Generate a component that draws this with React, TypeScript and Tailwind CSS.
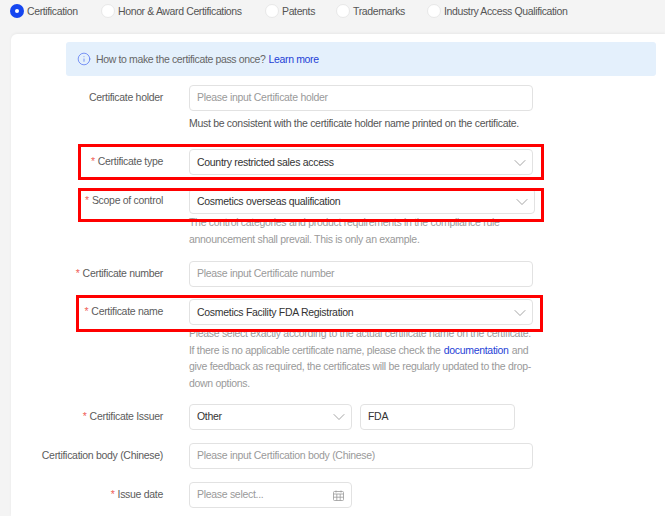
import React from 'react';
import { ChevronDown, Info } from 'lucide-react';

const tabs = ['Certification', 'Honor & Award Certifications', 'Patents', 'Trademarks', 'Industry Access Qualification'];
const tabClasses = ['w-[91px]', 'w-[164px]', 'w-[71px]', 'w-[91px]', 'w-auto'];

const Row: React.FC<{ label: string; required?: boolean; className?: string; children: React.ReactNode }> = ({ label, required, className, children }) => (
  <div className={`flex ${className || ''}`}>
    <div className="w-[141px] shrink-0 pr-[26px] h-[26px] flex items-center justify-end text-[10.5px] tracking-[-0.3px] text-[#5c5c5c] whitespace-nowrap">
      {required && <span className="text-[#f0625a] mr-[3px]">*</span>}
      {label}
    </div>
    <div className="min-w-0">{children}</div>
  </div>
);

const Field: React.FC<{ text: string; placeholder?: boolean; className?: string; children?: React.ReactNode }> = ({ text, placeholder, className, children }) => (
  <div className={`h-[26px] flex items-center justify-between pl-[7px] pr-[2px] bg-white border border-[#e2e2e2] rounded-[4px] text-[10.5px] tracking-[-0.3px] whitespace-nowrap ${placeholder ? 'text-[#9a9a9a]' : 'text-[#333]'} ${className || ''}`}>
    <span>{text}</span>
    {children}
  </div>
);

const Chevron = () => <ChevronDown size={20} strokeWidth={0.8} className="text-[#777]" />;

const Help: React.FC<{ className?: string; children: React.ReactNode }> = ({ className, children }) => (
  <div className={`text-[10.5px] tracking-[-0.3px] leading-[16.5px] whitespace-nowrap ${className || ''}`}>{children}</div>
);

const CalendarIcon = () => (
  <svg width="11" height="11" viewBox="0 0 11 11" fill="none" stroke="#999" strokeWidth="0.8" className="mr-[5px]">
    <rect x="0.5" y="1.5" width="10" height="9" rx="1" />
    <path d="M0.5 4h10M3 0.5v2M8 0.5v2M3.8 4v6.5M7.2 4v6.5M0.5 7.2h10" />
  </svg>
);

// the red marks sit over the form, they are annotations on the picture
const Mark: React.FC<{ className: string }> = ({ className }) => (
  <div className={`absolute border-[3px] border-[#ff0000] pointer-events-none ${className}`} />
);

export default function App() {
  return (
    <div className="relative w-[665px] h-[516px] overflow-hidden bg-[#f4f4f4] font-['Liberation_Sans',Arial,sans-serif]">
      <div className="h-[34px] pl-[10px] pt-[4px] flex items-start">
        {tabs.map((t, i) => (
          <div key={t} className={`flex items-center h-[14px] text-[10.5px] tracking-[-0.37px] text-[#555] whitespace-nowrap ${tabClasses[i]}`}>
            {i === 0 ? (
              <span className="w-[14px] h-[14px] rounded-full bg-[#1546f0] flex items-center justify-center mr-[3px]">
                <span className="w-[4px] h-[4px] rounded-full bg-white" />
              </span>
            ) : (
              <span className="w-[14px] h-[14px] rounded-full bg-white border border-[#e8e8e8] mr-[3px]" />
            )}
            <span className="pt-[1px]">{t}</span>
          </div>
        ))}
      </div>

      <div className="ml-[11px] h-[482px] bg-white rounded-tl-[6px] pt-[8px] pl-[37px] shadow-[0_-1px_3px_rgba(0,0,0,0.05)]">
        <div className="ml-[18px] w-[590px] h-[34px] bg-[#e4f0fc] rounded-[3px] flex items-center pl-[11px] text-[10.5px] tracking-[-0.36px] text-[#666]">
          <Info size={14} strokeWidth={1.2} className="text-[#4a6cf0] mr-[5px]" />
          <span className="pt-[1px]">How to make the certificate pass once?</span>
          <span className="pt-[1px] text-[#1f3fd6] ml-[3px]">Learn more</span>
        </div>

        <Row label="Certificate holder" className="mt-[9px]">
          <Field text="Please input Certificate holder" placeholder className="w-[344px]" />
          <Help className="mt-[4px] text-[#555]">Must be consistent with the certificate holder name printed on the certificate.</Help>
        </Row>

        <Row label="Certificate type" required className="mt-[17.5px]">
          <Field text="Country restricted sales access" className="w-[344px] pt-[1px]"><Chevron /></Field>
        </Row>

        <Row label="Scope of control" required className="mt-[13px]">
          <Field text="Cosmetics overseas qualification" className="w-[346px] pt-[1px]"><Chevron /></Field>
          <Help className="text-[#9a9a9a]">
            <div>The control categories and product requirements in the compliance rule</div>
            <div>announcement shall prevail. This is only an example.</div>
          </Help>
        </Row>

        <Row label="Certificate number" required className="mt-[14px]">
          <Field text="Please input Certificate number" placeholder className="w-[344px]" />
        </Row>

        <Row label="Certificate name" required className="mt-[12px]">
          <Field text="Cosmetics Facility FDA Registration" className="w-[344px] pt-[1px]"><Chevron /></Field>
          <Help className="text-[#9a9a9a]">
            <div>Please select exactly according to the actual certificate name on the certificate.</div>
            <div className="flex gap-[3px]">
              <span>If there is no applicable certificate name, please check the</span>
              <span className="text-[#1f3fd6]">documentation</span>
              <span>and</span>
            </div>
            <div>give feedback as required, the certificates will be regularly updated to the drop-</div>
            <div>down options.</div>
          </Help>
        </Row>

        <Row label="Certificate Issuer" required className="mt-[13px]">
          <div className="flex gap-[8px]">
            <Field text="Other" className="w-[163px]"><Chevron /></Field>
            <Field text="FDA" className="w-[155px]" />
          </div>
        </Row>

        <Row label="Certification body (Chinese)" className="mt-[13px]">
          <Field text="Please input Certification body (Chinese)" placeholder className="w-[344px]" />
        </Row>

        <Row label="Issue date" required className="mt-[13px]">
          <Field text="Please select..." placeholder className="w-[163px]"><CalendarIcon /></Field>
        </Row>
      </div>

      <Mark className="left-[78px] top-[144px] w-[466px] h-[36px]" />
      <Mark className="left-[78px] top-[188px] w-[466px] h-[34px]" />
      <Mark className="left-[76px] top-[295px] w-[467px] h-[37px]" />
    </div>
  );
}
